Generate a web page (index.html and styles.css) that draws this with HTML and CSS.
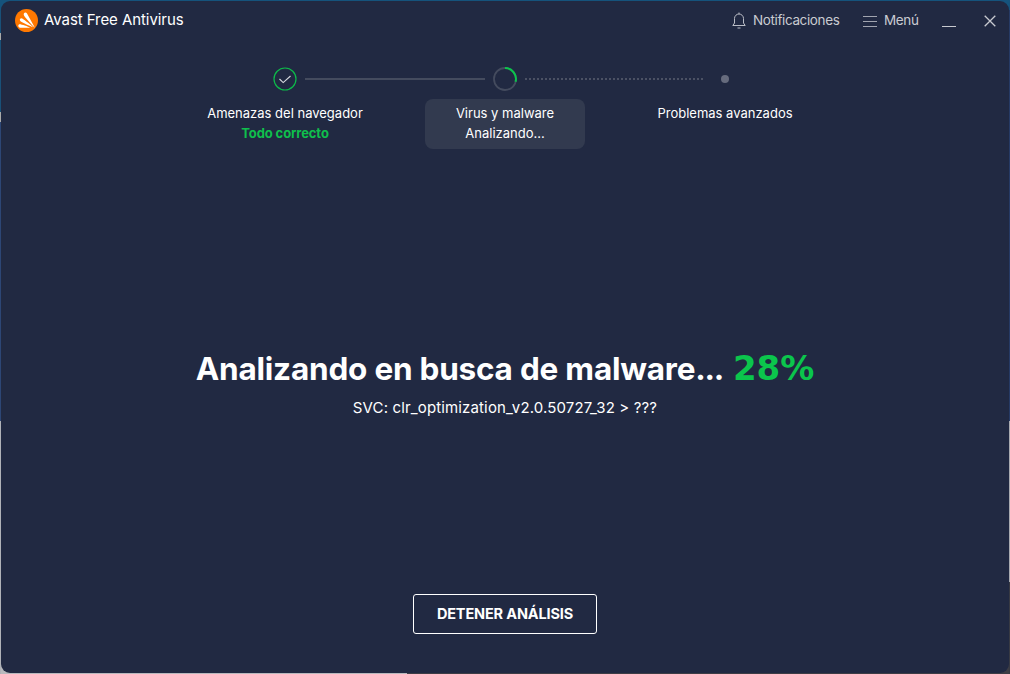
FILE: index.html
```
<!DOCTYPE html>
<html lang="es">
<head>
<meta charset="utf-8">
<title>Avast Free Antivirus</title>
<link rel="stylesheet" href="styles.css">
</head>
<body>
<div class="desktop">
<main class="window">
  <header class="titlebar">
    <svg class="logo" width="24" height="24" viewBox="0 0 24 24"><circle cx="11.500" cy="11.500" r="11.500" fill="#ff7800"/><g fill="#fff"><path d="M9 4.200c.8-1.200 2.400-.9 3 .3l8 14.400c-1.700-1.300-9.700-10.100-11-12.400-.4-.8-.4-1.600 0-2.300z"/><path d="M5.200 9.800c.7-.9 1.700-.7 2.500-.1 2 1.500 8 5.900 10.500 8.500-3-1.300-10.500-4.400-12.400-5.800-1-.7-1.200-1.900-.6-2.600z"/><path d="M4.200 15.300c1-.6 8.600 2.100 11 3.400H5.100c-1.800 0-2.400-2.600-.9-3.400z"/></g></svg>
    <h1 class="title"><span class="app-name">Avast Free Antivirus</span></h1>
    <div class="tool notifications">
      <svg width="14" height="18" viewBox="0 0 14 18" fill="none" stroke="#b9bcc5"><path d="M2.500 11V6.500a4.500 4.500 0 0 1 9 0V11l1.700 2.500H.8z"/><path d="M7 .5V2M5.500 16h3"/></svg>
      <span class="tool-label label-notifications">Notificaciones</span>
    </div>
    <div class="tool menu">
      <svg width="14" height="13" viewBox="0 0 14 13" stroke="#a1a4af"><path d="M0 1.500h14M0 6.500h14M0 11.500h14"/></svg>
      <span class="tool-label label-menu">Menú</span>
    </div>
    <svg class="minimize" width="14" height="12" viewBox="0 0 14 12"><path d="M0 11.500h14" stroke="#c8cad0"/></svg>
    <svg class="close" width="12" height="12" viewBox="0 0 12 12"><path d="M.7.700l10.600 10.600M11.300.7.700 11.300" stroke="#c8cad0" stroke-width="1.300"/></svg>
  </header>

  <section class="steps">
    <div class="track">
      <svg class="node" width="24" height="24" viewBox="0 0 24 24" fill="none"><circle cx="12" cy="12" r="11" stroke="#0dbb4a" stroke-width="1.200"/><path d="m6.500 12 3.700 3.600L17.500 9" stroke="#d7d9de" stroke-width="1.100"/></svg>
      <div class="line"></div>
      <svg class="node" width="24" height="24" viewBox="0 0 24 24" fill="none"><circle cx="12" cy="12" r="11" stroke="#444b5e" stroke-width="1.800"/><path d="M12 1a11 11 0 0 1 10.600 13.700" stroke="#0bc54c" stroke-width="2"/></svg>
      <svg class="dots" width="180" height="2" viewBox="0 0 180 2"><path d="M0 1h180" stroke="#4b5164" stroke-width="2" stroke-dasharray="2 2"/></svg>
      <div class="node pending"><i class="dot"></i></div>
    </div>
    <div class="captions">
      <div class="caption"><span class="step-name name-browser">Amenazas del navegador</span><span class="done">Todo correcto</span></div>
      <div class="caption active"><span class="step-name name-virus">Virus y malware</span><span class="state">Analizando...</span></div>
      <div class="caption"><span class="step-name name-advanced">Problemas avanzados</span></div>
    </div>
  </section>

  <section class="progress">
    <h2 class="headline"><span class="message">Analizando en busca de malware<span class="ellipsis">...</span></span><span class="percent">28%</span></h2>
    <p class="file"><span class="file-text">SVC: clr_optimization_v2.0.50727_32 &gt; ???</span></p>
  </section>

  <footer class="actions"><button class="stop"><span class="stop-text">DETENER ANÁLISIS</span></button></footer>
</main>
</div>
</body>
</html>
```
FILE: styles.css
```
* { box-sizing: border-box; }
body { margin: 0; font-family: Inter, sans-serif; color: #fff; }
.desktop {
  width: 1010px; height: 674px; padding: 1px; overflow: hidden;
  background:
    linear-gradient(#15537c, #15537c) 0 0 / 1010px 10px no-repeat,
    linear-gradient(#195078 0 23px, #aaa 23px 30px, #195078 30px 102px, #aaa 102px 112px, #2d4675 112px 411px, #b0b2b8 411px) 0 10px / 1px 100% no-repeat,
    linear-gradient(#263a65 0 411px, #a8aab0 411px 572px, #383a43 572px) 1009px 10px / 1px 100% no-repeat,
    linear-gradient(90deg, #b8b9bd 0 407px, #3d3d45 407px) 0 664px / 1010px 10px no-repeat,
    #212942;
}
.window { width: 1008px; height: 672px; background: #212942; border-radius: 9px; display: flex; flex-direction: column; }
.titlebar { height: 40px; padding: 0 13px 0 14px; display: flex; align-items: center; flex: none; }
.title { margin: 0 0 2px 5px; flex: 1; font-weight: 400; font-size: 15px; line-height: 20px; letter-spacing: -.07px; white-space: nowrap; }
.tool { display: flex; align-items: center; color: #c9cbd1; white-space: nowrap; }
.notifications { width: 131px; gap: 7px; }
.menu { width: 79px; gap: 7px; }
.tool-label { font-size: 13.500px; line-height: 20px; letter-spacing: -.38px; margin-bottom: 2px; }
.minimize { margin: 0 28px 0 0; }
.steps { width: 600px; margin: 26px auto 0; flex: none; }
.track { display: flex; align-items: center; justify-content: center; gap: 8px; }
.line, .dots { width: 180px; height: 2px; }
.line { background: #444b5e; }
.pending { width: 24px; height: 24px; display: grid; place-items: center; }
.dot { width: 8px; height: 8px; border-radius: 50%; background: #666b7d; }
.captions { display: flex; justify-content: center; gap: 60px; margin-top: 8px; }
.caption { width: 160px; height: 50px; padding-top: 4px; border-radius: 8px; display: flex; flex-direction: column; align-items: center; font-size: 13px; line-height: 20px; white-space: nowrap; }
.active { background: #323a4f; }
.done { color: #0fbf4c; font-weight: 700; letter-spacing: -.1px; }
.progress { margin-top: 200px; flex: none; }
.headline { height: 40px; margin: 0; display: flex; justify-content: center; gap: 10px; font-size: 31.500px; line-height: 40px; letter-spacing: -.22px; white-space: nowrap; }
.ellipsis { letter-spacing: -1.300px; }
.percent { color: #0bc54c; font-family: "DejaVu Sans", sans-serif; font-size: 34px; font-weight: 700; letter-spacing: 0; margin-top: -1px; }
.file { margin: 8px 0 0; text-align: center; font-size: 15px; letter-spacing: .14px; line-height: 22px; }
.actions { margin-top: 175px; display: flex; justify-content: center; }
.stop { width: 184px; height: 40px; padding: 0; border: 1px solid #fff; border-radius: 3px; background: transparent; color: #fff; font: 700 14.500px/20px Inter, sans-serif; letter-spacing: -.15px; white-space: nowrap; }
```
